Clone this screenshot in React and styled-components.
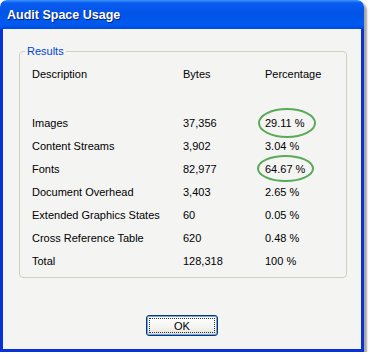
import React from "react";
import styled, { createGlobalStyle } from "styled-components";

const GlobalStyle = createGlobalStyle`
  body {
    margin: 0;
    background: #ffffff;
    font-family: "Liberation Sans", Arial, sans-serif;
  }
`;

const Window = styled.div`
  width: 364px;
  height: 352px;
  display: flex;
  flex-direction: column;
  border-radius: 7px 7px 0 0;
  box-shadow: 3px 3px 2px rgba(0, 0, 0, 0.35);
`;

const TitleBar = styled.div`
  height: 29px;
  flex-shrink: 0;
  display: flex;
  align-items: center;
  padding-left: 7px;
  border-radius: 7px 7px 0 0;
  background: linear-gradient(
    to bottom,
    #3d95ff 0%,
    #0a5cf0 10%,
    #0054e6 45%,
    #005af0 85%,
    #0048dc 100%
  );
  color: #ffffff;
  font-weight: bold;
  font-size: 12.5px;
  text-shadow: 1px 1px 0 #0a1f7a;
`;

const Body = styled.div`
  flex: 1;
  display: flex;
  flex-direction: column;
  align-items: stretch;
  background: #f4f4f3;
  border: 3px solid #0831d9;
  border-top: none;
  padding-top: 22px;
`;

const GroupBox = styled.section`
  position: relative;
  margin: 0 14px 0 16px;
  padding: 10px 12px 5px 5px;
  border: 1px solid #d0d0bf;
  border-radius: 4px;
  font-size: 11px;
`;

const Caption = styled.span`
  position: absolute;
  left: 5px;
  top: -7px;
  padding: 0 2px;
  background: #f4f4f3;
  color: #0046d5;
  font-size: 11px;
  line-height: 13px;
`;

const Table = styled.div`
  display: grid;
  grid-template-columns: 151px 82px 1fr;
  grid-template-rows: 49px;
  grid-auto-rows: 23px;
  padding-left: 7px;
  color: #000000;
`;

const Cell = styled.div`
  position: relative;
  display: flex;
  align-items: center;
  height: 23px;
  align-self: start;
  white-space: nowrap;
`;

const Ring = styled.svg`
  position: absolute;
  pointer-events: none;
  overflow: visible;
`;

const Footer = styled.div`
  display: flex;
  justify-content: center;
  padding-top: 37px;
`;

const Button = styled.button`
  position: relative;
  width: 72px;
  height: 21px;
  padding: 0;
  border: 1px solid #003c74;
  border-radius: 3px;
  background: linear-gradient(to bottom, #ffffff 0%, #f3f3ef 60%, #e3e2d8 100%);
  box-shadow: inset 0 0 0 1px #7ba2e7;
  font-family: "Liberation Sans", Arial, sans-serif;
  font-size: 11px;
  color: #000000;

  &::after {
    content: "";
    position: absolute;
    inset: 2px;
    border: 1px dotted #333333;
  }
`;

const rows = [
  ["Images", "37,356", "29.11 %", { x: -7, y: -15, w: 58, h: 30 }],
  ["Content Streams", "3,902", "3.04 %"],
  ["Fonts", "82,977", "64.67 %", { x: -8, y: -13.5, w: 57, h: 27 }],
  ["Document Overhead", "3,403", "2.65 %"],
  ["Extended Graphics States", "60", "0.05 %"],
  ["Cross Reference Table", "620", "0.48 %"],
  ["Total", "128,318", "100 %"],
];

const Circled = ({ ring }) => (
  <Ring
    width={ring.w}
    height={ring.h}
    style={{ left: ring.x, top: `calc(50% + ${ring.y}px)` }}
  >
    <ellipse
      cx={ring.w / 2}
      cy={ring.h / 2}
      rx={ring.w / 2 - 1}
      ry={ring.h / 2 - 1}
      fill="none"
      stroke="#5aaa5a"
      strokeWidth="2"
    />
  </Ring>
);

export default function App() {
  return (
    <>
      <GlobalStyle />
      <Window>
        <TitleBar>Audit Space Usage</TitleBar>
        <Body>
          <GroupBox>
            <Caption>Results</Caption>
            <Table>
              <Cell>Description</Cell>
              <Cell>Bytes</Cell>
              <Cell>Percentage</Cell>
              {rows.map(([name, bytes, pct, ring]) => (
                <React.Fragment key={name}>
                  <Cell>{name}</Cell>
                  <Cell>{bytes}</Cell>
                  <Cell>
                    {pct}
                    {ring && <Circled ring={ring} />}
                  </Cell>
                </React.Fragment>
              ))}
            </Table>
          </GroupBox>
          <Footer>
            <Button>OK</Button>
          </Footer>
        </Body>
      </Window>
    </>
  );
}
